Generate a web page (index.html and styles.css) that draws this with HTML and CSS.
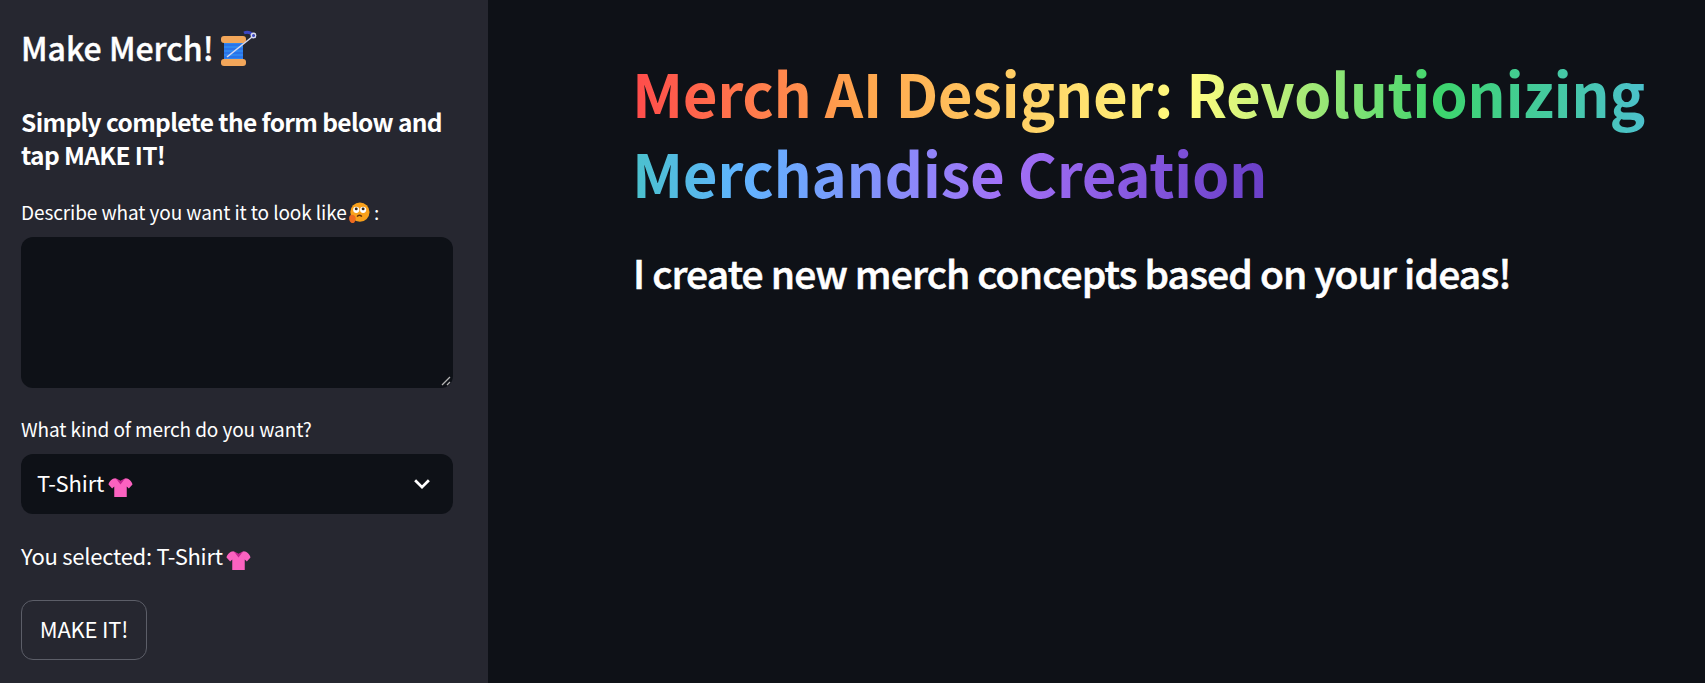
FILE: index.html
```html
<!DOCTYPE html>
<html lang="en">

<head>
    <meta charset="UTF-8">
    <meta name="viewport" content="width=device-width, initial-scale=1.0">
    <title>Merch AI Designer</title>
    <link rel="stylesheet" href="styles.css">
</head>

<body>

    <aside class="sidebar">
        <h2 class="side-title">Make Merch!
            <svg class="emoji spool" viewBox="0 0 38 38">
                <path d="M24 3c4-2 9 0 10 5" fill="none" stroke="#3b46c4" stroke-width="3"/>
                <rect x="4" y="10" width="19" height="21" fill="#2f86f0"/>
                <path d="M4 15h19M4 19h19M4 23h19M4 27h19" stroke="#2a6ee6" stroke-width="1.500"/>
                <rect x="1" y="6" width="25" height="7" rx="3" fill="#f2a65a"/>
                <rect x="1" y="29" width="25" height="7" rx="3" fill="#f2a65a"/>
                <path d="M7 27L32 7" stroke="#d7d9ee" stroke-width="1.600"/>
                <circle cx="33.500" cy="5.500" r="2.200" fill="none" stroke="#d7d9ee" stroke-width="1.400"/>
            </svg>
        </h2>
        <h3 class="side-sub">Simply complete the form below and tap MAKE IT!</h3>

        <label class="field-label" for="idea">Describe what you want it to look like
            <svg class="emoji face" viewBox="0 0 24 24">
                <circle cx="13" cy="11" r="10.500" fill="#f9a11b"/>
                <circle cx="9" cy="8.500" r="3.400" fill="#fff"/>
                <circle cx="16.500" cy="8.500" r="3.400" fill="#fff"/>
                <circle cx="9" cy="7.500" r="1.600" fill="#33261a"/>
                <circle cx="16.500" cy="7.500" r="1.600" fill="#33261a"/>
                <path d="M10 16c1-2 4-2 5 0" fill="none" stroke="#5a2d10" stroke-width="1.600"/>
                <path d="M2 15c2-2 5-1 6 1s0 7-3 7-5-5-3-8z" fill="#ee6a1f"/>
            </svg>
            :</label>
        <div class="idea-wrap">
            <textarea class="idea-box" id="idea"></textarea>
            <svg class="resize-grip" viewBox="0 0 10 10">
                <path d="M1 9L9 1M6 9L9 6" stroke="#b5b5b5" stroke-width="1.300"/>
            </svg>
        </div>

        <label class="field-label kind-label">What kind of merch do you want?</label>
        <div class="select-box">
            <span class="select-value">T-Shirt
                <svg class="emoji shirt" viewBox="0 0 24 20">
                    <path d="M7 1C4 1 1 4 .5 7L4 11l2-2v10h12V9l2 2 3.500-4C23 4 20 1 17 1l-5 3z" fill="#fb62c0"/>
                    <path d="M7.500 1L12 7l4.500-6L12 3.500z" fill="#c2258e"/>
                </svg>
            </span>
            <svg class="chevron" viewBox="0 0 16 16">
                <path d="M2.500 5l5.500 5.500L13.500 5" fill="none" stroke="#fff" stroke-width="2.200"/>
            </svg>
        </div>

        <p class="selected">You selected: T-Shirt
            <svg class="emoji shirt" viewBox="0 0 24 20">
                <path d="M7 1C4 1 1 4 .5 7L4 11l2-2v10h12V9l2 2 3.500-4C23 4 20 1 17 1l-5 3z" fill="#fb62c0"/>
                <path d="M7.500 1L12 7l4.500-6L12 3.500z" fill="#c2258e"/>
            </svg>
        </p>

        <button class="make-btn">MAKE IT!</button>
    </aside>

    <main class="content">
        <h1 class="headline"><span class="rainbow">Merch AI Designer: Revolutionizing Merchandise Creation</span></h1>
        <h2 class="tagline">I create new merch concepts based on your ideas!</h2>
    </main>

</body>

</html>
```

FILE: styles.css
```css
* {
    box-sizing: border-box;
}

body {
    margin: 0;
    height: 683px;
    overflow: hidden;
    display: flex;
    background: #0e1117;
    color: #fff;
    font-family: "Noto Sans CJK JP", "Noto Sans", sans-serif;
}

.sidebar {
    width: 488px;
    height: 683px;
    flex-shrink: 0;
    padding: 26px 35px 0 21px;
    background: #262730;
    display: flex;
    flex-direction: column;
    align-items: flex-start;
}

.emoji {
    display: inline-block;
    vertical-align: middle;
}

.side-title {
    margin: 0;
    font-size: 32px;
    line-height: 42px;
    font-weight: 500;
    letter-spacing: 0;
    -webkit-text-stroke: 0.4px #fff;
}

.spool {
    width: 38px;
    height: 38px;
    margin-left: -1px;
    margin-top: -6px;
}

.side-sub {
    margin: 37px 0 0;
    font-size: 24.5px;
    line-height: 33px;
    font-weight: 700;
    letter-spacing: -0.65px;
}

.field-label {
    margin-top: 28px;
    font-size: 19px;
    line-height: 26px;
    letter-spacing: -0.1px;
}

.face {
    width: 22px;
    height: 24px;
    margin-left: -3px;
    margin-top: -4px;
}

.idea-wrap {
    position: relative;
    width: 100%;
    height: 151px;
    margin-top: 12px;
}

.idea-box {
    display: block;
    width: 100%;
    height: 100%;
    background: #0e1117;
    border: none;
    border-radius: 12px;
    outline: none;
    resize: none;
}

.resize-grip {
    position: absolute;
    right: 2px;
    bottom: 2px;
    width: 10px;
    height: 10px;
}

.kind-label {
    margin-top: 28px;
}

.select-box {
    width: 100%;
    height: 60px;
    margin-top: 12px;
    padding: 0 21px 0 16px;
    background: #0e1117;
    border-radius: 12px;
    display: flex;
    align-items: center;
    justify-content: space-between;
}

.select-value {
    padding-bottom: 3px;
    font-size: 22px;
    line-height: 28px;
    letter-spacing: -0.1px;
}

.shirt {
    width: 25px;
    height: 21px;
    margin-left: -1px;
    margin-top: 2px;
}

.chevron {
    width: 20px;
    height: 20px;
}

.selected {
    margin: 27px 0 0;
    font-size: 22px;
    line-height: 28px;
    letter-spacing: -0.25px;
}

.make-btn {
    width: 126px;
    height: 60px;
    margin-top: 29px;
    padding: 0 0 3px;
    background: #262730;
    color: #fff;
    border: 1px solid #5c5e68;
    border-radius: 12px;
    font-family: inherit;
    font-size: 22px;
    letter-spacing: -0.2px;
}

.content {
    flex: 1;
    padding: 52px 40px 0 147px;
}

.headline {
    margin: 0 0 0 -3px;
    font-size: 60px;
    line-height: 80px;
    font-weight: 700;
    letter-spacing: -0.4px;
}

.rainbow {
    color: transparent;
    background: linear-gradient(to right, #ff4b4b 0%, #ffa64d 14%, #fffd80 34%, #3dd56d 49%, #4cc0d0 62%, #60b4ff 68%, #a371f7 84%, #6a3fc8 100%);
    -webkit-background-clip: text;
    background-clip: text;
}

.tagline {
    margin: 34px 0 0 -2px;
    font-size: 39px;
    line-height: 52px;
    font-weight: 500;
    letter-spacing: -0.85px;
    -webkit-text-stroke: 0.6px #fff;
}
```
